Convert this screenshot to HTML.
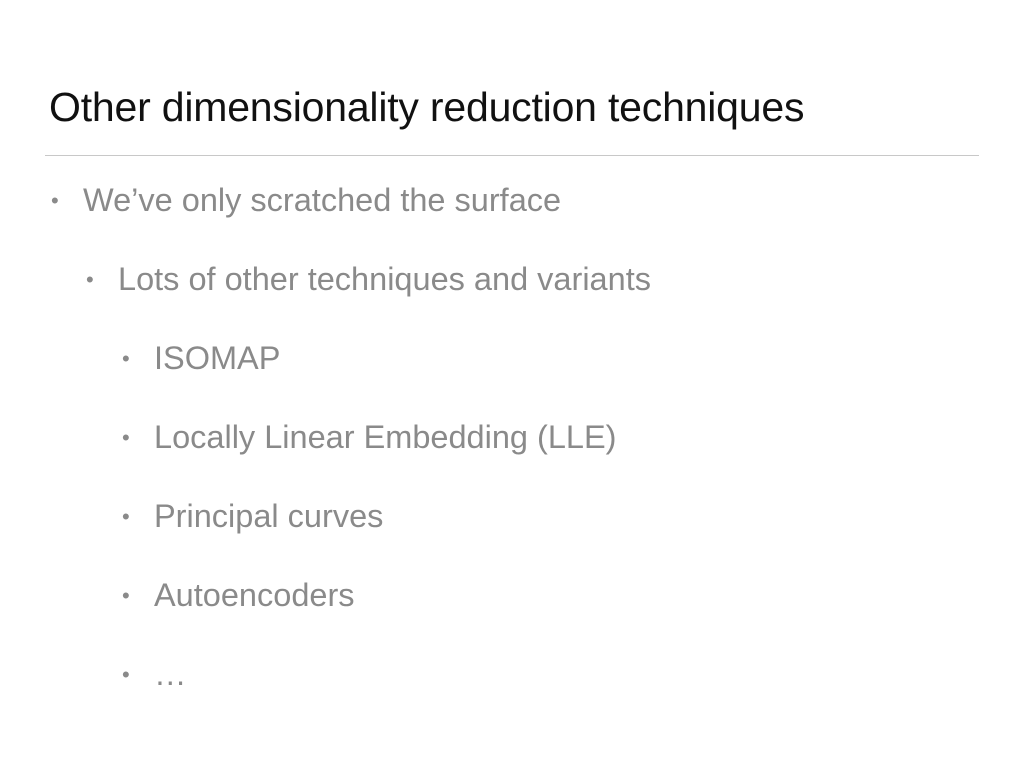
<!DOCTYPE html>
<html><head><meta charset="utf-8"><style>
html,body{margin:0;padding:0;background:#fff;}
body{width:1024px;height:768px;position:relative;overflow:hidden;font-family:"Liberation Sans",sans-serif;}
.t{position:absolute;left:49px;top:84px;font-size:41px;color:#111;white-space:nowrap;letter-spacing:-0.2px;}
.hr{position:absolute;left:45px;top:155px;width:934px;height:1px;background:#c8c8c8;}
.b{position:absolute;font-size:32.5px;color:#8a8a8a;white-space:nowrap;line-height:1;}
.d{position:absolute;font-size:22px;color:#8a8a8a;line-height:1;}
</style></head><body>
<div class="t">Other dimensionality reduction techniques</div>
<div class="hr"></div>

<div class="d" style="left:51px;top:190px">•</div>
<div class="b" style="left:83px;top:184px">We’ve only scratched the surface</div>

<div class="d" style="left:86px;top:269px">•</div>
<div class="b" style="left:118px;top:263px">Lots of other techniques and variants</div>

<div class="d" style="left:122px;top:348px">•</div>
<div class="b" style="left:154px;top:342px">ISOMAP</div>

<div class="d" style="left:122px;top:427px">•</div>
<div class="b" style="left:154px;top:421px">Locally Linear Embedding (LLE)</div>

<div class="d" style="left:122px;top:506px">•</div>
<div class="b" style="left:154px;top:500px">Principal curves</div>

<div class="d" style="left:122px;top:585px">•</div>
<div class="b" style="left:154px;top:579px">Autoencoders</div>

<div class="d" style="left:122px;top:664px">•</div>
<div class="b" style="left:154px;top:658px">…</div>
</body></html>
